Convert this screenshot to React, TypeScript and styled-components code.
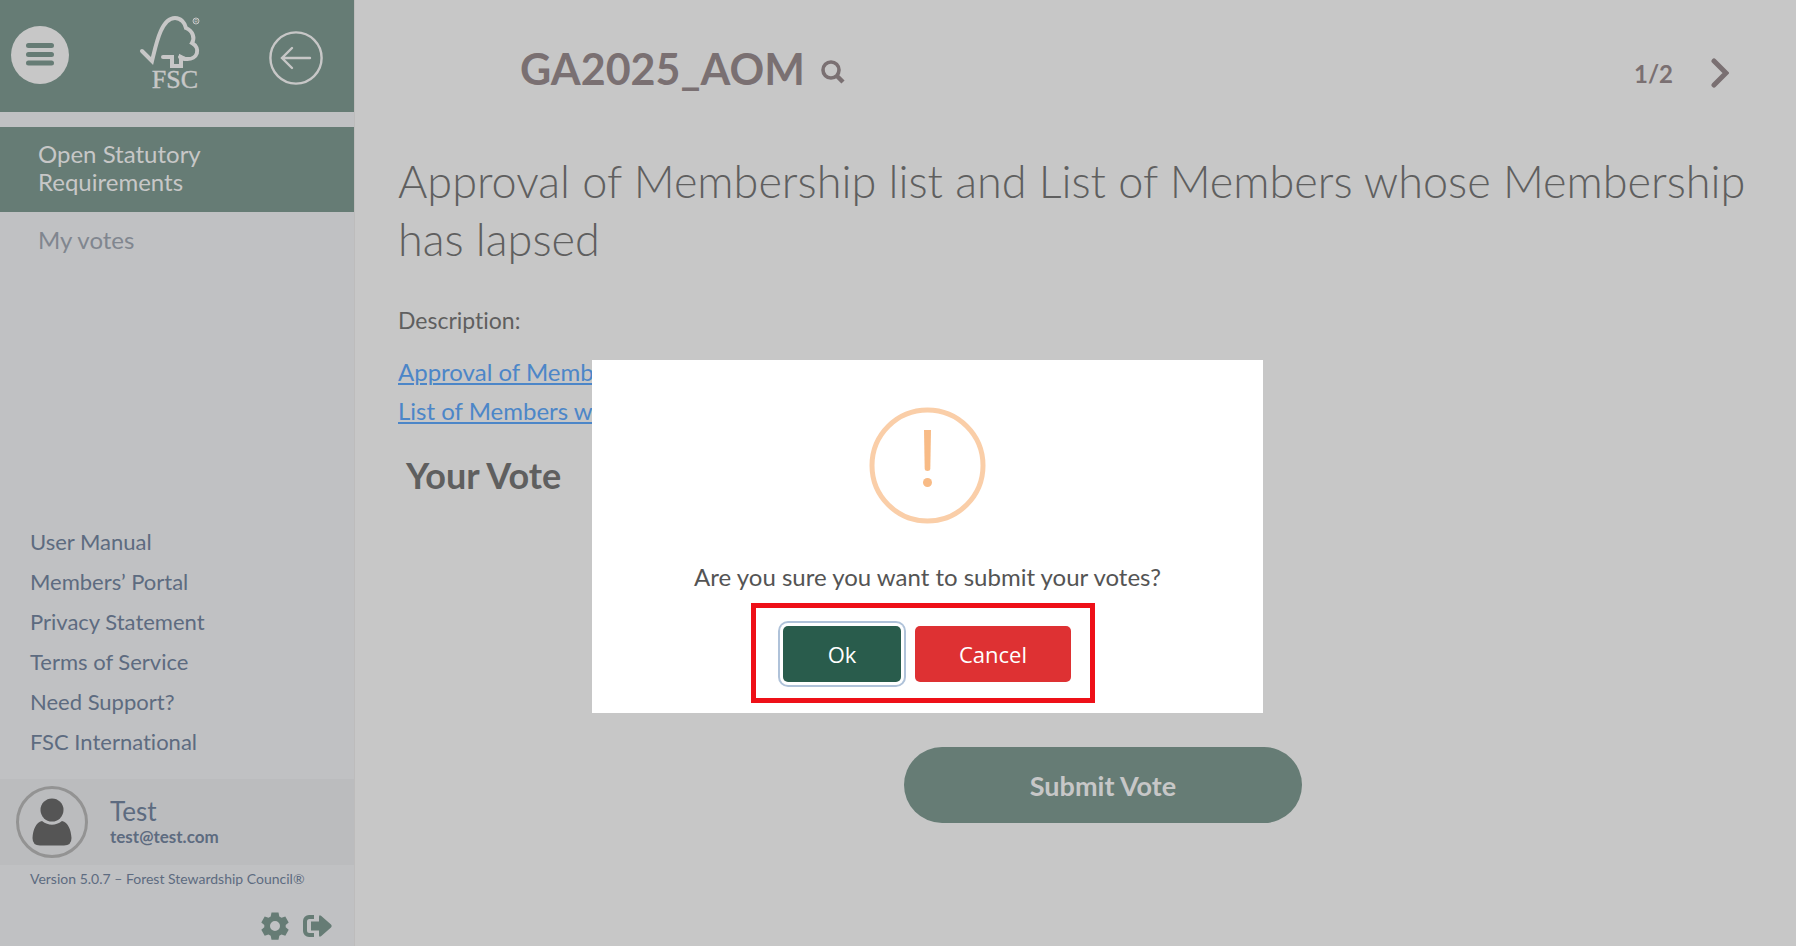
import React from "react";
import styled, { createGlobalStyle } from "styled-components";

const color = {
  page: "#c7c7c7",
  side: "#c0c1c3",
  sideDark: "#bbbcbe",
  green: "#667c75",
  pale: "#c7c7c7",
  slate: "#5d6b80",
  muted: "#80868f",
  text: "#5f5f5f",
  title: "#7a7072",
  link: "#4c86c8",
};

const GlobalStyle = createGlobalStyle`
  *, *::before, *::after { box-sizing: border-box; }
  body { margin: 0; background: ${color.page}; font-family: Lato, "Open Sans", sans-serif; font-variant-ligatures: none; color: ${color.text}; }
  h1, h2, h3, p, ul { margin: 0; padding: 0; }
  ul { list-style: none; }
  button { font-family: inherit; border: 0; padding: 0; background: none; color: inherit; cursor: pointer; }
  svg { display: block; }
`;

const Page = styled.div`
  display: flex;
  min-height: 100vh;
`;

const Sidebar = styled.aside`
  display: flex;
  flex-direction: column;
  flex: 0 0 354px;
  background: ${color.side};
  box-shadow: 1px 0 0 #bdbcbc;
`;

const Brand = styled.header`
  display: grid;
  grid-template-columns: 116px 115px 1fr;
  height: 112px;
  margin-bottom: 15px;
  background: ${color.green};
  color: ${color.pale};
`;

const BrandCell = styled.div<{ $top: number; $left: number }>`
  padding: ${(p) => p.$top}px 0 0 ${(p) => p.$left}px;
`;

const MenuButton = styled.button`
  display: grid;
  place-items: center;
  width: 58px;
  height: 58px;
  border-radius: 50%;
  background: ${color.pale};
  color: ${color.green};
`;

const NavItem = styled.a<{ $active?: boolean }>`
  display: block;
  padding: ${(p) => (p.$active ? "13px 120px 16px 38px" : "14px 38px")};
  background: ${(p) => (p.$active ? color.green : "transparent")};
  color: ${(p) => (p.$active ? color.pale : color.muted)};
  font-size: 24px;
  line-height: 28px;
  text-decoration: none;
`;

const FooterLinks = styled.ul`
  margin-top: auto;
  padding: 0 30px 17px;
`;

const FooterLink = styled.a`
  display: block;
  color: ${color.slate};
  font-size: 22px;
  line-height: 40px;
  text-decoration: none;
`;

const Account = styled.div`
  display: flex;
  align-items: center;
  gap: 22px;
  height: 86px;
  padding-left: 16px;
  background: ${color.sideDark};
  color: ${color.slate};
`;

const Avatar = styled.div`
  display: grid;
  place-items: center;
  width: 72px;
  height: 72px;
  border: 3px solid #939393;
  border-radius: 50%;
`;

const UserName = styled.div`
  font-size: 26px;
  line-height: 30px;
`;

const UserMail = styled.div`
  font-size: 17px;
  font-weight: 700;
  line-height: 22px;
`;

const Version = styled.p`
  padding-left: 30px;
  color: ${color.slate};
  font-size: 14px;
  line-height: 28px;
`;

const Tools = styled.div`
  display: flex;
  justify-content: flex-end;
  gap: 14px;
  padding: 19px 22px 6px 0;
  color: ${color.green};
`;

const Main = styled.main`
  flex: 1;
  min-width: 0;
  padding: 42px 48px 0 44px;
`;

const TopBar = styled.div`
  display: flex;
  align-items: center;
  height: 54px;
  padding-left: 122px;
  color: ${color.title};
`;

const Title = styled.h1`
  font-size: 43px;
  line-height: 54px;
`;

const SearchButton = styled.button`
  margin: 6px 0 0 16px;
`;

const Pager = styled.div`
  display: flex;
  align-items: center;
  gap: 38px;
  margin-left: auto;
  padding: 8px 19px 0 0;
  font-size: 24px;
  font-weight: 700;
`;

const Heading = styled.h2`
  margin-top: 56px;
  font-size: 45px;
  font-weight: 300;
  line-height: 58px;
`;

const Label = styled.p`
  margin-top: 35px;
  font-size: 23px;
  line-height: 34px;
`;

const Documents = styled.ul`
  margin-top: 15px;
`;

const DocumentLink = styled.a`
  color: ${color.link};
  font-size: 24px;
  line-height: 39px;
  text-decoration-thickness: 2px;
  text-underline-offset: 2px;
`;

const VoteHeading = styled.h3`
  margin-top: 22px;
  padding-left: 8px;
  font-size: 36px;
  line-height: 46px;
`;

const SubmitRow = styled.div`
  display: flex;
  justify-content: center;
  padding: 249px 0 32px 60px;
`;

const SubmitButton = styled.button`
  width: 398px;
  height: 76px;
  border-radius: 38px;
  background: ${color.green};
  color: ${color.pale};
  font-size: 27px;
  font-weight: 700;
`;

const Overlay = styled.div`
  position: fixed;
  inset: 0;
  display: flex;
  align-items: center;
  justify-content: center;
  padding: 127px 0 0 59px;
`;

const Dialog = styled.div`
  display: flex;
  flex-direction: column;
  align-items: center;
  width: 671px;
  padding: 47px 0 10px;
  background: #fff;
`;

const Question = styled.p`
  margin-top: 37px;
  color: #545454;
  font-size: 24px;
  line-height: 32px;
`;

const Highlight = styled.div`
  display: flex;
  gap: 14px;
  margin: 10px 9px 0 0;
  padding: 18px 19px 16px 27px;
  border: 5px solid #ee1018;
`;

const DialogButton = styled.button<{ $primary?: boolean }>`
  width: ${(p) => (p.$primary ? 118 : 156)}px;
  height: 56px;
  border-radius: 5px;
  background: ${(p) => (p.$primary ? "#295c4c" : "#de3133")};
  box-shadow: ${(p) => (p.$primary ? "0 0 0 3px #fff, 0 0 0 5px #afc2d9" : "none")};
  color: #fff;
  font-family: "Open Sans", sans-serif;
  font-size: 22px;
`;

const footerLinks = [
  "User Manual",
  "Members’ Portal",
  "Privacy Statement",
  "Terms of Service",
  "Need Support?",
  "FSC International",
];

const documents = [
  "Approval of Membership list",
  "List of Members whose Membership has lapsed",
];

const Logo = () => (
  <svg width="64" height="78" viewBox="0 0 64 78" role="img" aria-label="FSC">
    <g fill="none" stroke="currentColor" strokeWidth="4" strokeLinecap="round">
      <path d="M4 36 L14 46 C18 30 23 3 37 3 C43 3 47 8 48 13 C55 16 57 23 54 28 C63 33 60 45 48 44 Q44 44 42 42" />
      <path d="M25 42 H34 V51 H43 V42 L47 44" />
    </g>
    <circle cx="58" cy="6" r="3" fill="none" stroke="currentColor" />
    <text x="58" y="8" textAnchor="middle" fontFamily="Liberation Sans" fontSize="5" fill="currentColor">
      R
    </text>
    <text x="37" y="73" textAnchor="middle" fontFamily="Liberation Serif" fontSize="26" fill="currentColor" stroke="currentColor" strokeWidth="0.4">
      FSC
    </text>
  </svg>
);

const MenuIcon = () => (
  <svg width="30" height="26" viewBox="0 0 30 26" stroke="currentColor" strokeWidth="5" strokeLinecap="round">
    <path d="M3.500 3.500H26.500M3.500 12.500H26.500M3.500 21H26.500" />
  </svg>
);

const BackIcon = () => (
  <svg width="54" height="54" viewBox="0 0 54 54" fill="none" stroke="currentColor" strokeWidth="2.400" strokeLinecap="round">
    <circle cx="27" cy="27" r="25.600" />
    <path d="M41 27H13M23 17L13 27L23 37" />
  </svg>
);

const PersonIcon = () => (
  <svg width="40" height="48" viewBox="0 0 40 48" fill="#555">
    <circle cx="20" cy="12" r="11.500" />
    <path d="M10 23 Q20 30.500 30 23 C36 24 39 32 39.500 40 Q39.500 47.500 32 47.500 H8 Q0.500 47.500 0.500 40 C1 32 4 24 10 23Z" />
  </svg>
);

const SearchIcon = () => (
  <svg width="24" height="24" viewBox="0 0 24 24" fill="none" stroke="currentColor">
    <circle cx="10" cy="10" r="8" strokeWidth="3.600" />
    <path d="M15.500 15.500L22 22" strokeWidth="4.500" />
  </svg>
);

const ChevronIcon = () => (
  <svg width="18" height="30" viewBox="0 0 18 30" fill="none" stroke="currentColor" strokeWidth="5" strokeLinecap="round">
    <path d="M3 3L15 15L3 27" />
  </svg>
);

const GearIcon = () => (
  <svg width="28" height="28" viewBox="0 0 28 28" fill="currentColor">
    <path
      fillRule="evenodd"
      d="M10.500 0.500h7l.8 4 2.200 1.300 3.800-1.400 3.400 6-3 2.600v2.200l3 2.600-3.400 6-3.800-1.400-2.200 1.300-.8 4h-7l-.8-4-2.200-1.300-3.800 1.400-3.400-6 3-2.600v-2.200l-3-2.600 3.400-6 3.800 1.400 2.200-1.300zM14 9a5 5 0 1 0 0 10a5 5 0 1 0 0-10z"
    />
  </svg>
);

const LogoutIcon = () => (
  <svg width="29" height="28" viewBox="0 0 29 28" fill="currentColor">
    <path d="M11 3H6a6 6 0 0 0-6 6v10a6 6 0 0 0 6 6h5v-4H6.500A2.500 2.500 0 0 1 4 18.500v-9A2.500 2.500 0 0 1 6.500 7H11z" />
    <path d="M8 9.500h8V5q0-3 2.300-1L28 12.500q1.300 1.500 0 3L18.300 24q-2.300 2-2.300-1v-4.500H8z" />
  </svg>
);

const WarningIcon = () => (
  <svg width="118" height="117" viewBox="0 0 118 117" aria-hidden="true">
    <circle cx="58.500" cy="58.500" r="55.500" fill="none" stroke="#facea8" strokeWidth="5" />
    <path d="M55 23H62L61.300 62Q61.200 64 58.500 64Q55.800 64 55.700 62Z" fill="#f8bb86" />
    <circle cx="58.500" cy="75.500" r="4.500" fill="#f8bb86" />
  </svg>
);

export default function App() {
  return (
    <>
      <GlobalStyle />
      <Page>
        <Sidebar>
          <Brand>
            <BrandCell $top={26} $left={11}>
              <MenuButton aria-label="Menu">
                <MenuIcon />
              </MenuButton>
            </BrandCell>
            <BrandCell $top={15} $left={22}>
              <Logo />
            </BrandCell>
            <BrandCell $top={31} $left={38}>
              <button aria-label="Back">
                <BackIcon />
              </button>
            </BrandCell>
          </Brand>
          <nav>
            <NavItem href="#open" $active>
              Open Statutory Requirements
            </NavItem>
            <NavItem href="#votes">My votes</NavItem>
          </nav>
          <FooterLinks>
            {footerLinks.map((label) => (
              <li key={label}>
                <FooterLink href="#">{label}</FooterLink>
              </li>
            ))}
          </FooterLinks>
          <Account>
            <Avatar>
              <PersonIcon />
            </Avatar>
            <div>
              <UserName>Test</UserName>
              <UserMail>test@test.com</UserMail>
            </div>
          </Account>
          <Version>Version 5.0.7 – Forest Stewardship Council®</Version>
          <Tools>
            <button aria-label="Settings">
              <GearIcon />
            </button>
            <button aria-label="Log out">
              <LogoutIcon />
            </button>
          </Tools>
        </Sidebar>
        <Main>
          <TopBar>
            <Title>GA2025_AOM</Title>
            <SearchButton aria-label="Search">
              <SearchIcon />
            </SearchButton>
            <Pager>
              <span>1/2</span>
              <button aria-label="Next">
                <ChevronIcon />
              </button>
            </Pager>
          </TopBar>
          <Heading>
            Approval of Membership list and List of Members whose Membership has lapsed
          </Heading>
          <Label>Description:</Label>
          <Documents>
            {documents.map((label) => (
              <li key={label}>
                <DocumentLink href="#">{label}</DocumentLink>
              </li>
            ))}
          </Documents>
          <VoteHeading>Your Vote</VoteHeading>
          <SubmitRow>
            <SubmitButton>Submit Vote</SubmitButton>
          </SubmitRow>
        </Main>
      </Page>
      <Overlay>
        <Dialog role="dialog" aria-modal="true" aria-labelledby="question">
          <WarningIcon />
          <Question id="question">Are you sure you want to submit your votes?</Question>
          <Highlight>
            <DialogButton $primary>Ok</DialogButton>
            <DialogButton>Cancel</DialogButton>
          </Highlight>
        </Dialog>
      </Overlay>
    </>
  );
}
